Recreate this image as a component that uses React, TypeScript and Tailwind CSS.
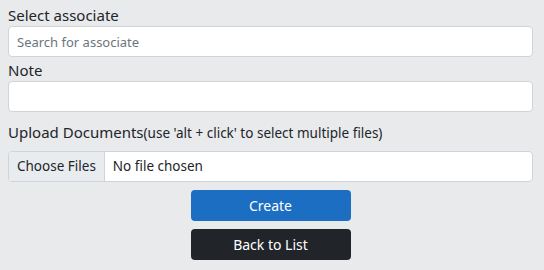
export default function App() {
  return (
    <div
      className="min-h-[270px] w-full bg-[#e9eaec] pl-2 pr-[11px] pt-[4px] text-[#212529]"
      style={{ fontFamily: '"Noto Sans", "Open Sans", sans-serif' }}
    >
      <form className="flex flex-col">
        <label className="text-[15px] leading-[22px]">Select associate</label>
        <input
          type="text"
          placeholder="Search for associate"
          className="h-[31px] w-full rounded-[4px] border border-[#ced4da] bg-white px-[8px] text-[13px] placeholder:text-[#6c757d] outline-none"
        />

        <label className="mt-[2px] text-[15px] leading-[22px]">Note</label>
        <input
          type="text"
          className="h-[31px] w-full rounded-[4px] border border-[#ced4da] bg-white px-[8px] text-[13px] outline-none"
        />

        <div className="mt-[9px] leading-[22px]">
          <span className="text-[15px]">Upload Documents</span>
          <span className="text-[13.5px]">(use 'alt + click' to select multiple files)</span>
        </div>

        <div className="mt-[7px] flex h-[31px] w-full overflow-hidden rounded-[4px] border border-[#ced4da] bg-white text-[13.5px]">
          <span className="flex items-center border-r border-[#ced4da] bg-[#e9ecef] px-[8px]">Choose Files</span>
          <span className="flex items-center px-[8px]">No file chosen</span>
        </div>

        <div className="mt-[8px] flex flex-col items-center gap-[8px]">
          <button
            type="button"
            className="h-[31px] w-[160px] rounded-[4px] bg-[#1b6ec2] text-[14px] text-white"
          >
            Create
          </button>
          <button
            type="button"
            className="h-[31px] w-[160px] rounded-[4px] bg-[#212529] text-[14px] text-white"
          >
            Back to List
          </button>
        </div>
      </form>
    </div>
  );
}
